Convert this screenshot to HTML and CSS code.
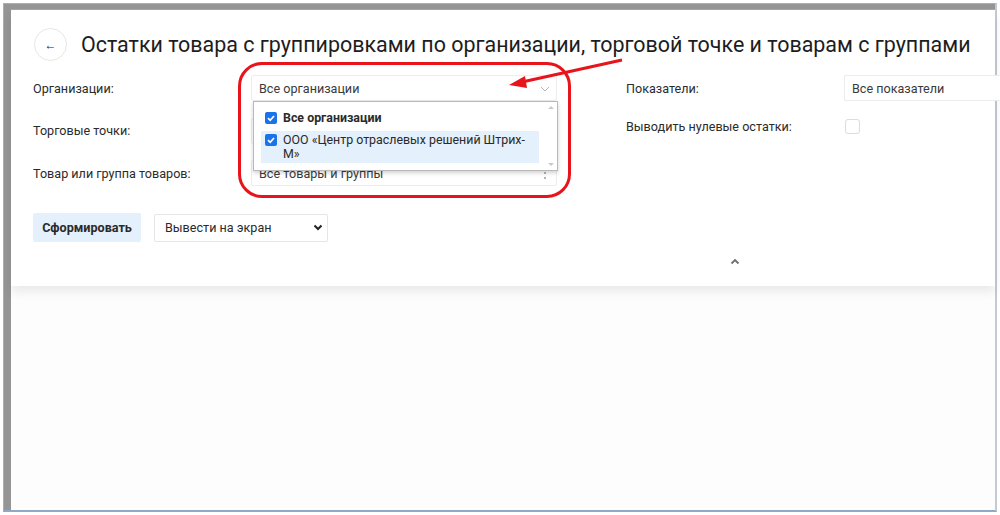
FILE: index.html
```html
<!DOCTYPE html>
<html lang="ru">
<head>
<meta charset="utf-8">
<title>Остатки товара</title>
<link rel="stylesheet" href="styles.css">
</head>
<body>
<div class="frame">
  <div class="inner">
    <div class="card">
      <div class="header">
        <div class="back">&#8592;</div>
        <h1 class="title">Остатки товара с группировками по организации, торговой точке и товарам с группами</h1>
      </div>
      <div class="form">
        <div class="col col-left">
          <div class="row">
            <div class="label">Организации:</div>
            <div class="field field-open">
              <span>Все организации</span>
              <svg class="chev" width="10" height="6" viewBox="0 0 10 6"><polyline points="1,1 5,5 9,1" fill="none" stroke="#b8b8b8" stroke-width="1"/></svg>
              <div class="dropdown">
                <div class="opt opt-bold"><span class="cb"><svg width="12" height="12" viewBox="0 0 12 12"><polyline points="3,6.2 5.2,8.3 9,4" fill="none" stroke="#fff" stroke-width="1.7"/></svg></span><span>Все организации</span></div>
                <div class="opt opt-sel"><span class="cb"><svg width="12" height="12" viewBox="0 0 12 12"><polyline points="3,6.2 5.2,8.3 9,4" fill="none" stroke="#fff" stroke-width="1.7"/></svg></span><span>ООО «Центр отраслевых решений Штрих-М»</span></div>
                <div class="scroll"><span class="sc-up"></span><span class="sc-down"></span></div>
              </div>
            </div>
          </div>
          <div class="row">
            <div class="label">Торговые точки:</div>
            <div class="field"></div>
          </div>
          <div class="row">
            <div class="label">Товар или группа товаров:</div>
            <div class="field">
              <span>Все товары и группы</span>
              <span class="dots"><i></i><i></i><i></i></span>
            </div>
          </div>
        </div>
        <div class="col col-right">
          <div class="row">
            <div class="label">Показатели:</div>
            <div class="field field-wide"><span>Все показатели</span></div>
          </div>
          <div class="row row-check">
            <div class="label">Выводить нулевые остатки:</div>
            <div class="check"></div>
          </div>
        </div>
      </div>
      <div class="actions">
        <button class="btn">Сформировать</button>
        <div class="select">
          <span>Вывести на экран</span>
          <svg width="10" height="7" viewBox="0 0 10 7"><polyline points="1.5,1.5 5,5 8.5,1.5" fill="none" stroke="#222" stroke-width="2"/></svg>
        </div>
      </div>
      <div class="collapse">
        <svg width="10" height="7" viewBox="0 0 10 7"><polyline points="1.5,5.5 5,2 8.5,5.5" fill="none" stroke="#6b6f78" stroke-width="1.8"/></svg>
      </div>
    </div>
    <div class="below"></div>
  </div>
  <div class="mark-box"></div>
  <svg class="mark-arrow" width="1000" height="120" viewBox="0 0 1000 120">
    <line x1="622" y1="60" x2="522" y2="82" stroke="#e8141b" stroke-width="3"/>
    <polygon points="509,85 525,76 527,88" fill="#e8141b"/>
  </svg>
</div>
</body>
</html>
```
FILE: styles.css
```css
* { box-sizing: border-box; }
html, body { margin: 0; padding: 0; background: #fff; }
body {
  font-family: Roboto, "Noto Sans", "Liberation Sans", sans-serif;
  color: #333;
  width: 1000px;
  height: 515px;
  overflow: hidden;
}
.frame {
  position: relative;
  margin: 3px 3px 0 3px;
  width: 994px;
  height: 509px;
  border: 1px solid #9fb1c6;
  border-bottom: 2px solid #8fa9c6;
  border-right: 2px solid #c3cad3;
  background: #959595;
}
.inner {
  position: absolute;
  left: 7px; top: 5px; right: 0; bottom: 0;
  background: #fdfdfd;
  border-top: 1px solid #a6a6a6;
  display: flex;
  flex-direction: column;
}
.card {
  background: #fff;
  height: 276px;
  padding: 18px 0 0 22px;
  position: relative;
  box-shadow: 0 6px 10px rgba(0,0,0,0.08);
  z-index: 1;
}
.below { flex: 1; background: #fdfdfd; }
.header {
  display: flex;
  align-items: center;
  gap: 14px;
  height: 33px;
  margin-left: 1px;
}
.back {
  width: 33px; height: 33px;
  border: 1px solid #e6e6e6;
  border-radius: 50%;
  display: flex; align-items: center; justify-content: center;
  font-size: 12px; color: #222;
  line-height: 1;
}
.title {
  margin: 0;
  font-size: 21.45px;
  font-weight: 400;
  color: #1d1d1d;
  white-space: nowrap;
}
.form {
  display: flex;
  gap: 69px;
  margin-top: 14px;
}
.col { display: flex; flex-direction: column; }
.col-left { gap: 16.5px; width: 524px; }
.col-right { gap: 12px; }
.row { display: flex; align-items: center; height: 26px; }
.label {
  width: 218px;
  font-size: 12.6px;
  color: #2b2b2b;
}
.field {
  position: relative;
  width: 306px;
  height: 26px;
  border: 1px solid #ededed;
  border-radius: 2px;
  background: #fff;
  display: flex; align-items: center;
  padding: 0 7px;
  font-size: 12.6px;
  color: #3a3a3a;
}
.field-wide { width: 160px; border-right: none; }
.chev { position: absolute; right: 6px; top: 10px; }
.dots {
  position: absolute; right: 10px; top: 6px;
  display: flex; flex-direction: column; gap: 3px;
}
.dots i { width: 2px; height: 2px; background: #9a9a9a; border-radius: 1px; display: block; }
.dropdown {
  position: absolute;
  left: 1px; top: 25px;
  width: 305px; height: 70px;
  background: #fff;
  border: 1px solid #b9b9b9;
  box-shadow: 0 2px 4px rgba(0,0,0,0.18);
  z-index: 5;
  padding: 8px 18px 0 7px;
  color: #2a2a2a;
}
.opt {
  display: flex; align-items: flex-start; gap: 6px;
  padding: 1px 4px;
  font-size: 12.4px;
  line-height: 14px;
}
.opt-bold { font-weight: 700; margin-bottom: 5px; }
.opt-sel { background: #e4f0fb; padding: 2px 8px 2px 4px; }
.cb {
  flex: none;
  width: 12px; height: 12px;
  margin-top: 1px;
  background: #1a73e8;
  border-radius: 2px;
  display: flex;
}
.scroll {
  position: absolute; right: 3px; top: 4px; bottom: 4px; width: 6px;
}
.sc-up, .sc-down {
  position: absolute; left: 0;
  width: 0; height: 0;
  border-left: 3px solid transparent;
  border-right: 3px solid transparent;
}
.sc-up { top: 0; border-bottom: 3px solid #c9c9c9; }
.sc-down { bottom: 0; border-top: 3px solid #c9c9c9; }
.check {
  width: 15px; height: 15px;
  border: 1px solid #dcdcdc;
  border-radius: 3px;
  margin-left: 1px;
}
.actions {
  display: flex;
  gap: 13px;
  margin-top: 27px;
  align-items: center;
}
.btn {
  font-family: inherit;
  font-size: 12.6px;
  font-weight: 700;
  color: #2a2a2a;
  background: #e4f0fb;
  border: none;
  border-radius: 2px;
  width: 108px; height: 29px;
  padding: 0;
}
.select {
  width: 174px; height: 28px;
  border: 1px solid #e6e6e6;
  border-radius: 2px;
  display: flex; align-items: center; justify-content: space-between;
  padding: 0 4px 0 10px;
  font-size: 12.6px;
  color: #2a2a2a;
}
.collapse {
  margin: 8px 0 0 697px;
  height: 10px;
}
.mark-box {
  position: absolute;
  left: 234px; top: 58px;
  width: 333px; height: 136px;
  border: 3px solid #e8141b;
  border-radius: 24px;
  z-index: 10;
  pointer-events: none;
}
.mark-arrow {
  position: absolute;
  left: -4px; top: -4px;
  z-index: 11;
  pointer-events: none;
}
```
